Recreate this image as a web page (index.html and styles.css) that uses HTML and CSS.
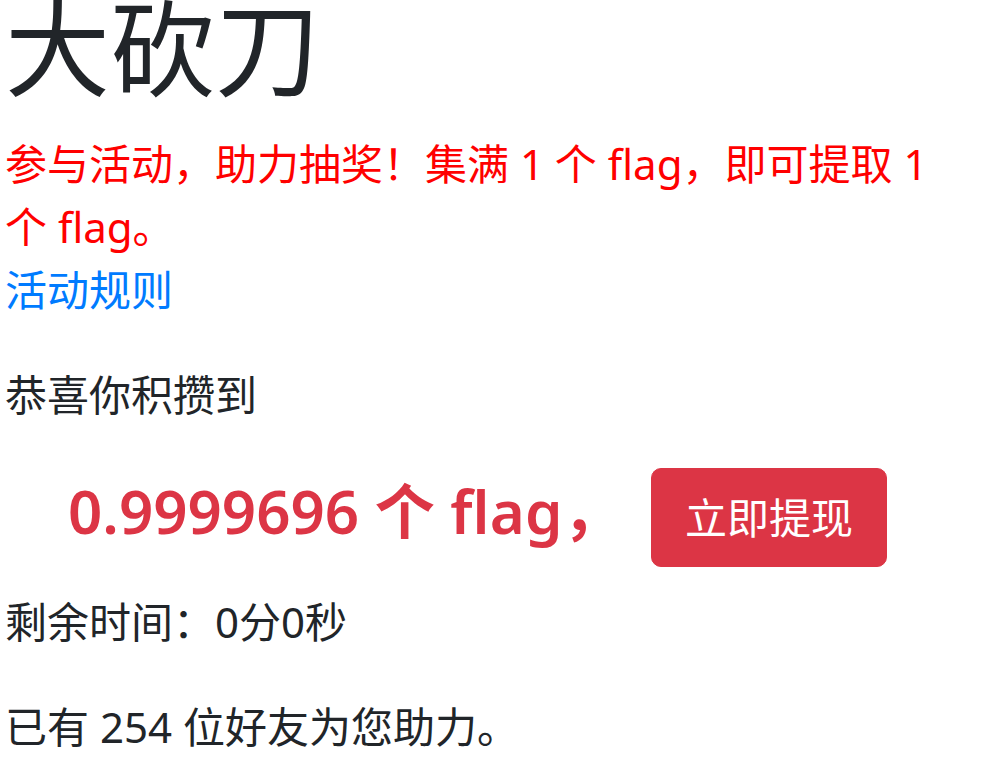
FILE: index.html
```html
<!DOCTYPE html>
<html lang="zh-CN">
<head>
<meta charset="utf-8">
<title>大砍刀</title>
<link rel="stylesheet" href="styles.css">
</head>
<body>
<div class="page">
  <h1 class="title">大砍刀</h1>
  <div class="intro">
    <p class="notice">参与活动，助力抽奖！集满 1 个 flag，即可提取 1 个 flag。</p>
    <a class="rules" href="#">活动规则</a>
  </div>
  <p class="line">恭喜你积攒到</p>
  <div class="prize">
    <div class="amount-col">
      <h4 class="amount">0.9999696 个 flag，</h4>
    </div>
    <button class="btn-withdraw" type="button">立即提现</button>
  </div>
  <p class="line">剩余时间：0分0秒</p>
  <p class="line">已有 254 位好友为您助力。</p>
</div>
</body>
</html>
```

FILE: styles.css
```css
html, body {
  margin: 0;
  padding: 0;
  background: #fff;
}

body {
  font-family: "Noto Sans", "Noto Sans CJK SC", sans-serif;
  font-size: 42px;
  line-height: 1.5;
  color: #212529;
}

.page {
  padding: 0 40px 0 5px;
}

.title {
  font-size: 105px;
  font-weight: 400;
  line-height: 95px;
  margin: 0 0 37px;
  color: #212529;
}

.intro {
  margin: 0 0 42px;
}

.notice {
  margin: 0;
  color: #ff0000;
  max-width: 940px;
}

.rules {
  color: #007bff;
  text-decoration: none;
}

.line {
  margin: 0 0 42px;
}

.prize {
  display: flex;
  align-items: baseline;
  margin: 0 0 23px;
}

.amount-col {
  width: 646px;
  padding-left: 63px;
  box-sizing: border-box;
  flex: 0 0 auto;
}

.amount {
  margin: 0;
  font-size: 60px;
  font-weight: 600;
  line-height: 1.2;
  color: #dc3545;
  white-space: nowrap;
}

.btn-withdraw {
  font-family: "Noto Sans", "Noto Sans CJK SC", sans-serif;
  font-size: 42px;
  line-height: 63px;
  color: #fff;
  background: #dc3545;
  border: 1px solid #dc3545;
  border-radius: 10px;
  padding: 17px 33px;
  cursor: pointer;
}
```
